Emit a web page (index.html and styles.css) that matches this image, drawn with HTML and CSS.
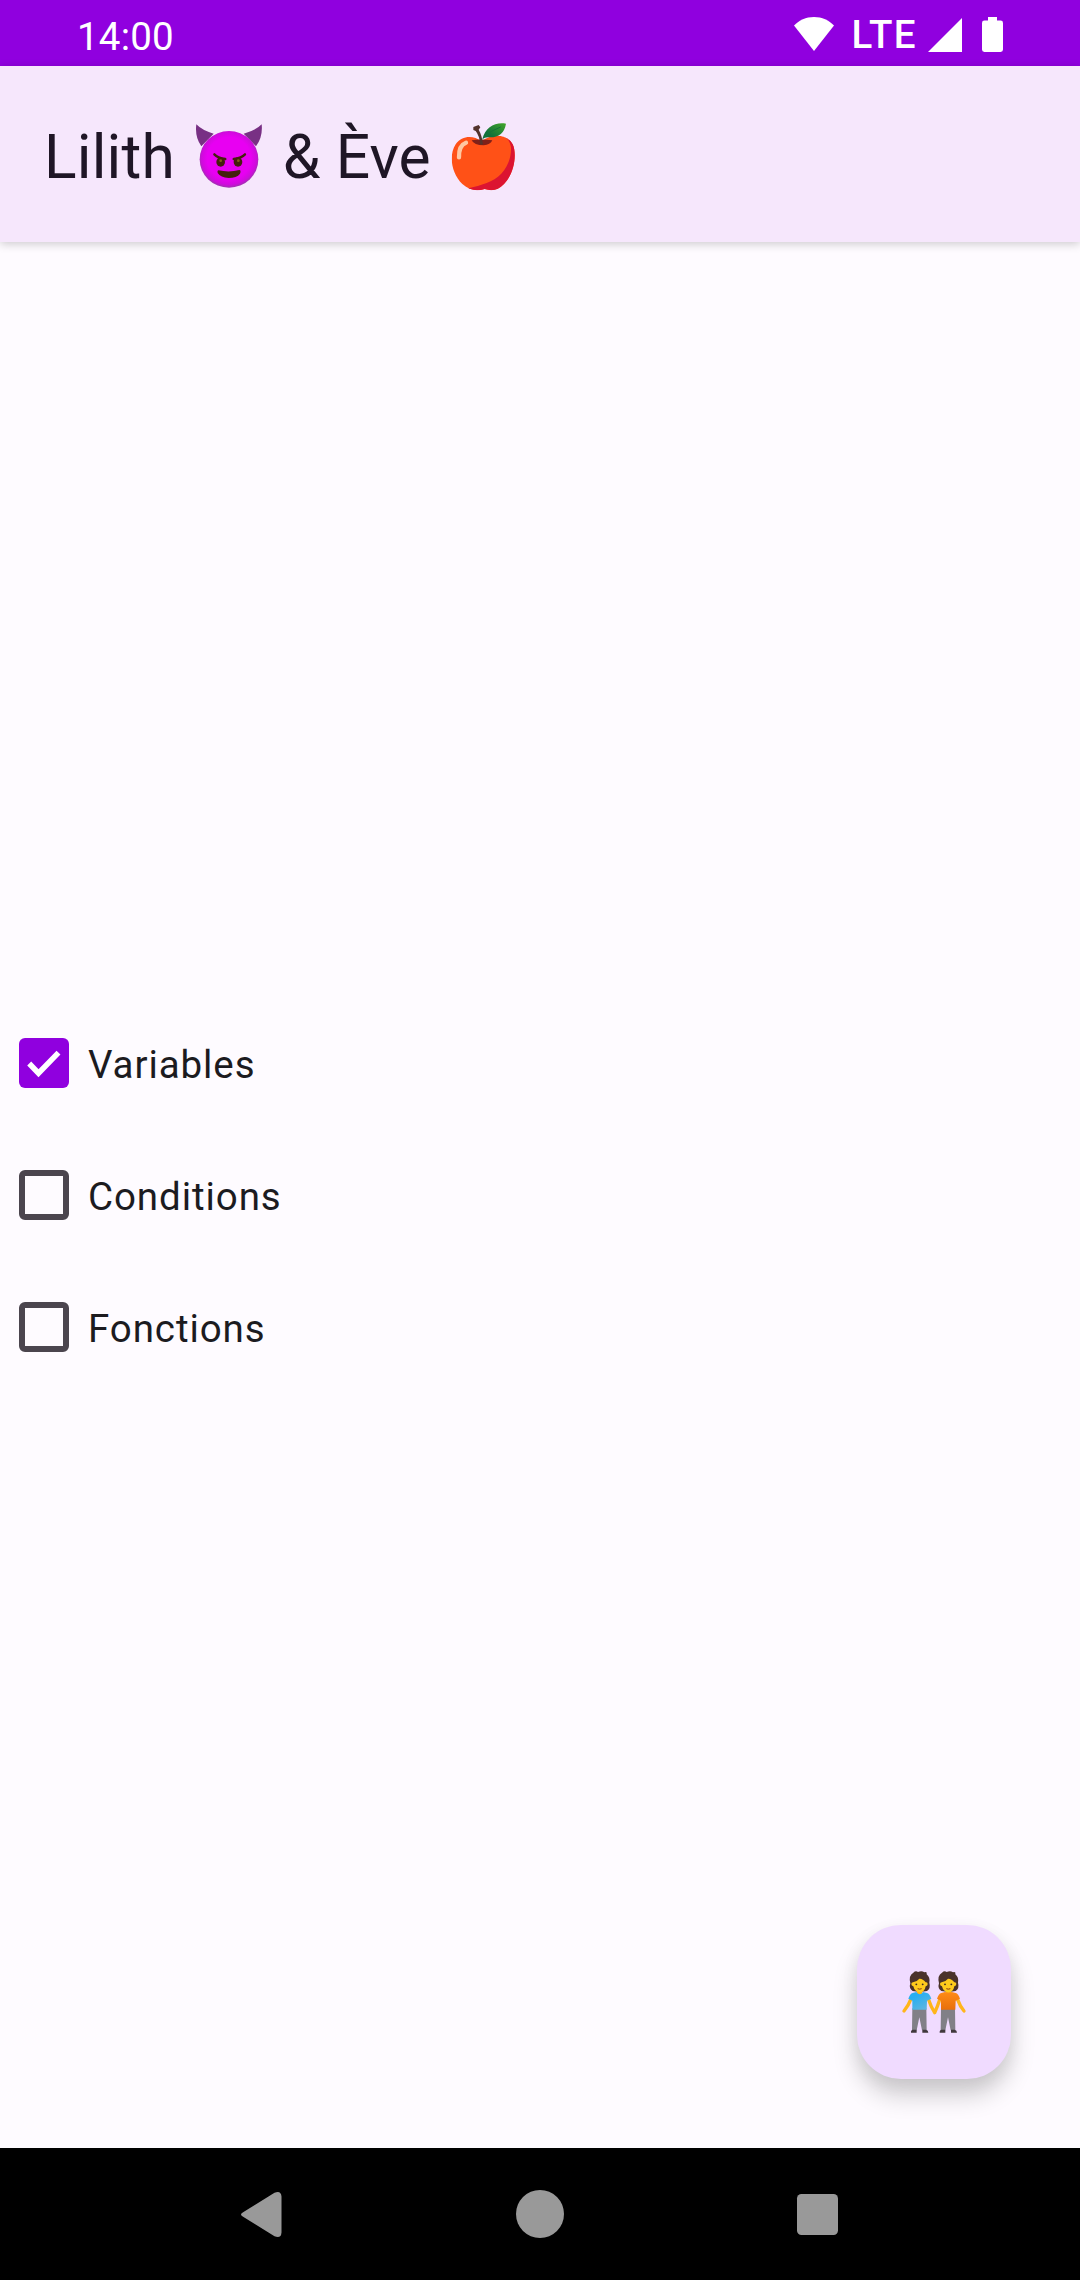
FILE: index.html
```html
<!DOCTYPE html>
<html lang="fr">
<head>
<meta charset="utf-8">
<title>Lilith &amp; Ève</title>
<link rel="stylesheet" href="styles.css">
</head>
<body>
<div class="screen">
  <header class="status-bar">
    <time class="clock">14:00</time>
    <div class="status-icons">
      <svg class="wifi" viewBox="0 0 40 34"><path d="M20 34L0 8.6C5 3.400 12 0 20 0s15 3.400 20 8.600z"/></svg>
      <span class="network">LTE</span>
      <svg class="signal" viewBox="0 0 34 34"><path d="M34 0v34H0z"/></svg>
      <svg class="battery" viewBox="0 0 21 35"><path d="M6 0h9v3.500h3.600q2.400 0 2.400 2.400v26.700q0 2.400-2.400 2.400H2.400Q0 35 0 32.600V5.900q0-2.400 2.400-2.400H6z"/></svg>
    </div>
  </header>

  <div class="app-bar">
    <h1 class="title">
      <span>Lilith</span>
      <svg class="devil" viewBox="30 40 204 200">
        <defs>
          <radialGradient id="face" cx=".5" cy=".48" r=".53">
            <stop offset=".7" stop-color="#e800f2"/><stop offset=".88" stop-color="#cf0bdc"/><stop offset="1" stop-color="#963aa6"/>
          </radialGradient>
        </defs>
        <path fill="#783084" d="M34 44Q51 62 86 72L49 110Q29 82 34 44zM230 44Q213 62 176 72L213 110Q234 82 230 44z"/>
        <ellipse cx="132" cy="149" rx="88" ry="85" fill="url(#face)"/>
        <ellipse cx="107" cy="157" rx="13" ry="14" fill="#45200d"/>
        <ellipse cx="159" cy="157" rx="13" ry="14" fill="#45200d"/>
        <path d="M88 134Q98 145 121 148M180 134Q170 145 146 148" fill="none" stroke="#45200d" stroke-width="7" stroke-linecap="round"/>
        <circle cx="107" cy="153" r="4" fill="#856018"/><circle cx="160" cy="153" r="4" fill="#856018"/>
        <path fill="#45200d" d="M100 182Q133 189 163 181Q169 182 165 192Q155 205 131 205Q107 204 98 190Q96 182 100 182z"/>
      </svg>
      <span>&amp; Ève</span>
      <svg class="apple" viewBox="36 36 195 210">
        <defs>
          <linearGradient id="leaf" x1="0" y1="1" x2="1" y2="0"><stop offset=".3" stop-color="#12703a"/><stop offset="1" stop-color="#42a62a"/></linearGradient>
          <clipPath id="fruit"><path d="M127 94C103 75 69 76 50 103C28 137 38 191 70 222C92 242 114 244 137 237C159 244 177 241 195 222C225 193 235 132 221 103C204 72 158 69 127 94z"/></clipPath>
        </defs>
        <g clip-path="url(#fruit)">
          <path fill="#ff5117" d="M30 60h210v190H30z"/>
          <path fill="#dc1431" d="M177 76Q209 76 216 111C218 166 184 205 143 219Q113 231 82 236L94 251H236V70z"/>
        </g>
        <path fill="#7f2019" d="M98 91Q124 86 160 91Q154 104 134 106Q105 106 98 91z"/>
        <path fill="#53332c" d="M103 51L119 45L124 52L119 59Q129 76 132 103L124 104Q121 76 110 63L103 60z"/>
        <path fill="url(#leaf)" d="M130 88C139 51 168 36 201 41Q194 82 153 82Q138 80 130 88z"/>
        <path d="M135 81Q156 61 185 51" fill="none" stroke="#167338" stroke-width="3"/>
        <path d="M60 142Q59 106 81 98" fill="none" stroke="#ffc7a1" stroke-width="13" stroke-linecap="round"/>
      </svg>
    </h1>
  </div>

  <main class="content">
    <label class="option"><span class="box checked"><svg viewBox="0 0 50 50"><path d="M10.200 25.500l9.300 9.700 20-20.500"/></svg></span><span class="label">Variables</span></label>
    <label class="option"><span class="box"></span><span class="label">Conditions</span></label>
    <label class="option"><span class="box"></span><span class="label">Fonctions</span></label>

    <button class="fab" aria-label="Personnes">
      <svg class="people" viewBox="33 27 198 198">
        <defs>
          <linearGradient id="blue" x2=".7" y2="1"><stop offset=".3" stop-color="#27aef2"/><stop offset="1" stop-color="#5fb5df"/></linearGradient>
          <linearGradient id="orange" x2="0" y2="1"><stop stop-color="#ff8b16"/><stop offset="1" stop-color="#e8700c"/></linearGradient>
          <g id="person">
            <path fill="#818087" d="M67 145H109L110 211H96L88 172L80 211H66z"/>
            <path fill="#40383c" d="M63 218Q62 210 69 209H80V218zM97 209H108Q115 210 115 218H97z"/>
            <path fill="#4a322a" d="M68 93Q56 85 61 70Q55 46 70 38Q77 31 84 36Q95 31 103 37Q112 34 110 43Q121 52 118 68Q123 84 111 93Q90 98 68 93z"/>
            <path fill="#ffb515" d="M81 88h16v16H81z"/>
            <path fill="#ffcb1c" d="M69 67Q82 64 88 56Q98 55 107 67Q113 66 113 72Q113 78 107 79Q104 97 89 97Q74 96 70 79Q64 78 64 72Q64 67 69 67z"/>
            <circle cx="79" cy="73" r="2.800" fill="#3d2b25"/><circle cx="98" cy="73" r="2.800" fill="#3d2b25"/>
            <path d="M83 86Q89 89 95 86" fill="none" stroke="#863515" stroke-width="3"/>
          </g>
        </defs>
        <path d="M62 119Q56 136 42 153" class="arm"/>
        <path d="M116 119Q123 141 134 158Q142 141 149 119M203 119Q210 139 222 153" class="arm"/>
        <use href="#person"/>
        <use href="#person" x="86"/>
        <path fill="url(#blue)" d="M68 99L79 96Q90 110 99 96L111 99Q119 101 124 116L111 122L110 149H67V122L55 116Q60 101 68 99z"/>
        <path fill="url(#orange)" d="M154 99L165 96Q176 101 185 96L197 99Q205 101 210 116L197 122L196 149H153V122L141 116Q146 101 154 99z"/>
      </svg>
    </button>
  </main>

  <nav class="nav-bar">
    <svg viewBox="0 0 50 50"><path d="M5.500 22.100L36.500 2.700Q43 0 43.500 6.500V42.500Q43 49 36.500 46.300L5.500 26.900Q.5 24.500 5.500 22.100z"/></svg>
    <svg viewBox="0 0 50 50"><circle cx="25" cy="24" r="24"/></svg>
    <svg viewBox="0 0 50 50"><rect x="5" y="4" width="41" height="41" rx="4.500"/></svg>
  </nav>
</div>
</body>
</html>
```
FILE: styles.css
```css
* { box-sizing: border-box; }
body { margin: 0; font-family: Roboto, sans-serif; }
svg { display: block; flex: none; }

.screen {
  width: 1080px;
  height: 2280px;
  display: flex;
  flex-direction: column;
  background: #fefbff;
}

.status-bar {
  height: 66px;
  flex: none;
  display: flex;
  justify-content: space-between;
  padding: 0 77px 0 77px;
  background: #9000df;
  color: #fff;
  font-size: 38.5px;
  line-height: 46px;
}
.clock { padding-top: 14px; letter-spacing: .2px; }
.status-icons { display: flex; align-items: flex-start; }
.status-icons svg { fill: #fff; }
.wifi { width: 40px; height: 34px; margin-top: 17px; }
.network {
  margin: 12px 11px 0 17px;
  font-weight: 500;
  letter-spacing: 1.4px;
}
.signal { width: 34px; height: 34px; margin: 17.500px 20px 0 0; }
.battery { width: 21px; height: 35px; margin-top: 16.500px; }

.app-bar {
  height: 176px;
  flex: none;
  position: relative;
  padding: 46px 44px 0;
  background: #f6e7fc;
  box-shadow: 0 2px 9px rgba(0, 0, 0, .2);
}
.title {
  margin: 0;
  display: flex;
  align-items: flex-start;
  color: #1f1626;
  font-size: 60.5px;
  font-weight: 400;
  line-height: 92px;
  letter-spacing: .2px;
}
.devil { width: 68px; height: 66.700px; margin: 11px 19.800px 0 19.800px; }
.apple { width: 65px; height: 70px; margin: 10px 0 0 20.500px; }

.content {
  flex: 1;
  display: flex;
  flex-direction: column;
  justify-content: center;
  position: relative;
}
.option {
  height: 132px;
  display: flex;
  align-items: center;
  gap: 19px;
  padding-left: 19px;
  color: #1c1b1f;
  font-size: 38.5px;
  letter-spacing: .92px;
}
.label { padding-top: 2px; }
.box {
  width: 50px;
  height: 50px;
  border: 6px solid #4b454e;
  border-radius: 6px;
}
.box.checked { border: 0; background: #9000df; }
.box path { fill: none; stroke: #fff; stroke-width: 5.500; }

.fab {
  position: absolute;
  right: 69px;
  bottom: 69px;
  width: 154px;
  height: 154px;
  display: grid;
  place-items: center;
  padding: 0;
  border: 0;
  border-radius: 44px;
  background: #f0dbff;
  box-shadow: 0 17px 24px rgba(0, 0, 0, .18), 0 5px 18px rgba(0, 0, 0, .06);
}
.people { width: 66px; height: 66px; margin-right: 1px; }
.arm { fill: none; stroke: #ffb51b; stroke-width: 10; stroke-linecap: round; stroke-linejoin: round; }

.nav-bar {
  height: 132px;
  flex: none;
  display: flex;
  justify-content: space-between;
  padding: 42px 238px 0;
  background: #000;
}
.nav-bar svg { width: 50px; height: 50px; fill: #999; }
```
